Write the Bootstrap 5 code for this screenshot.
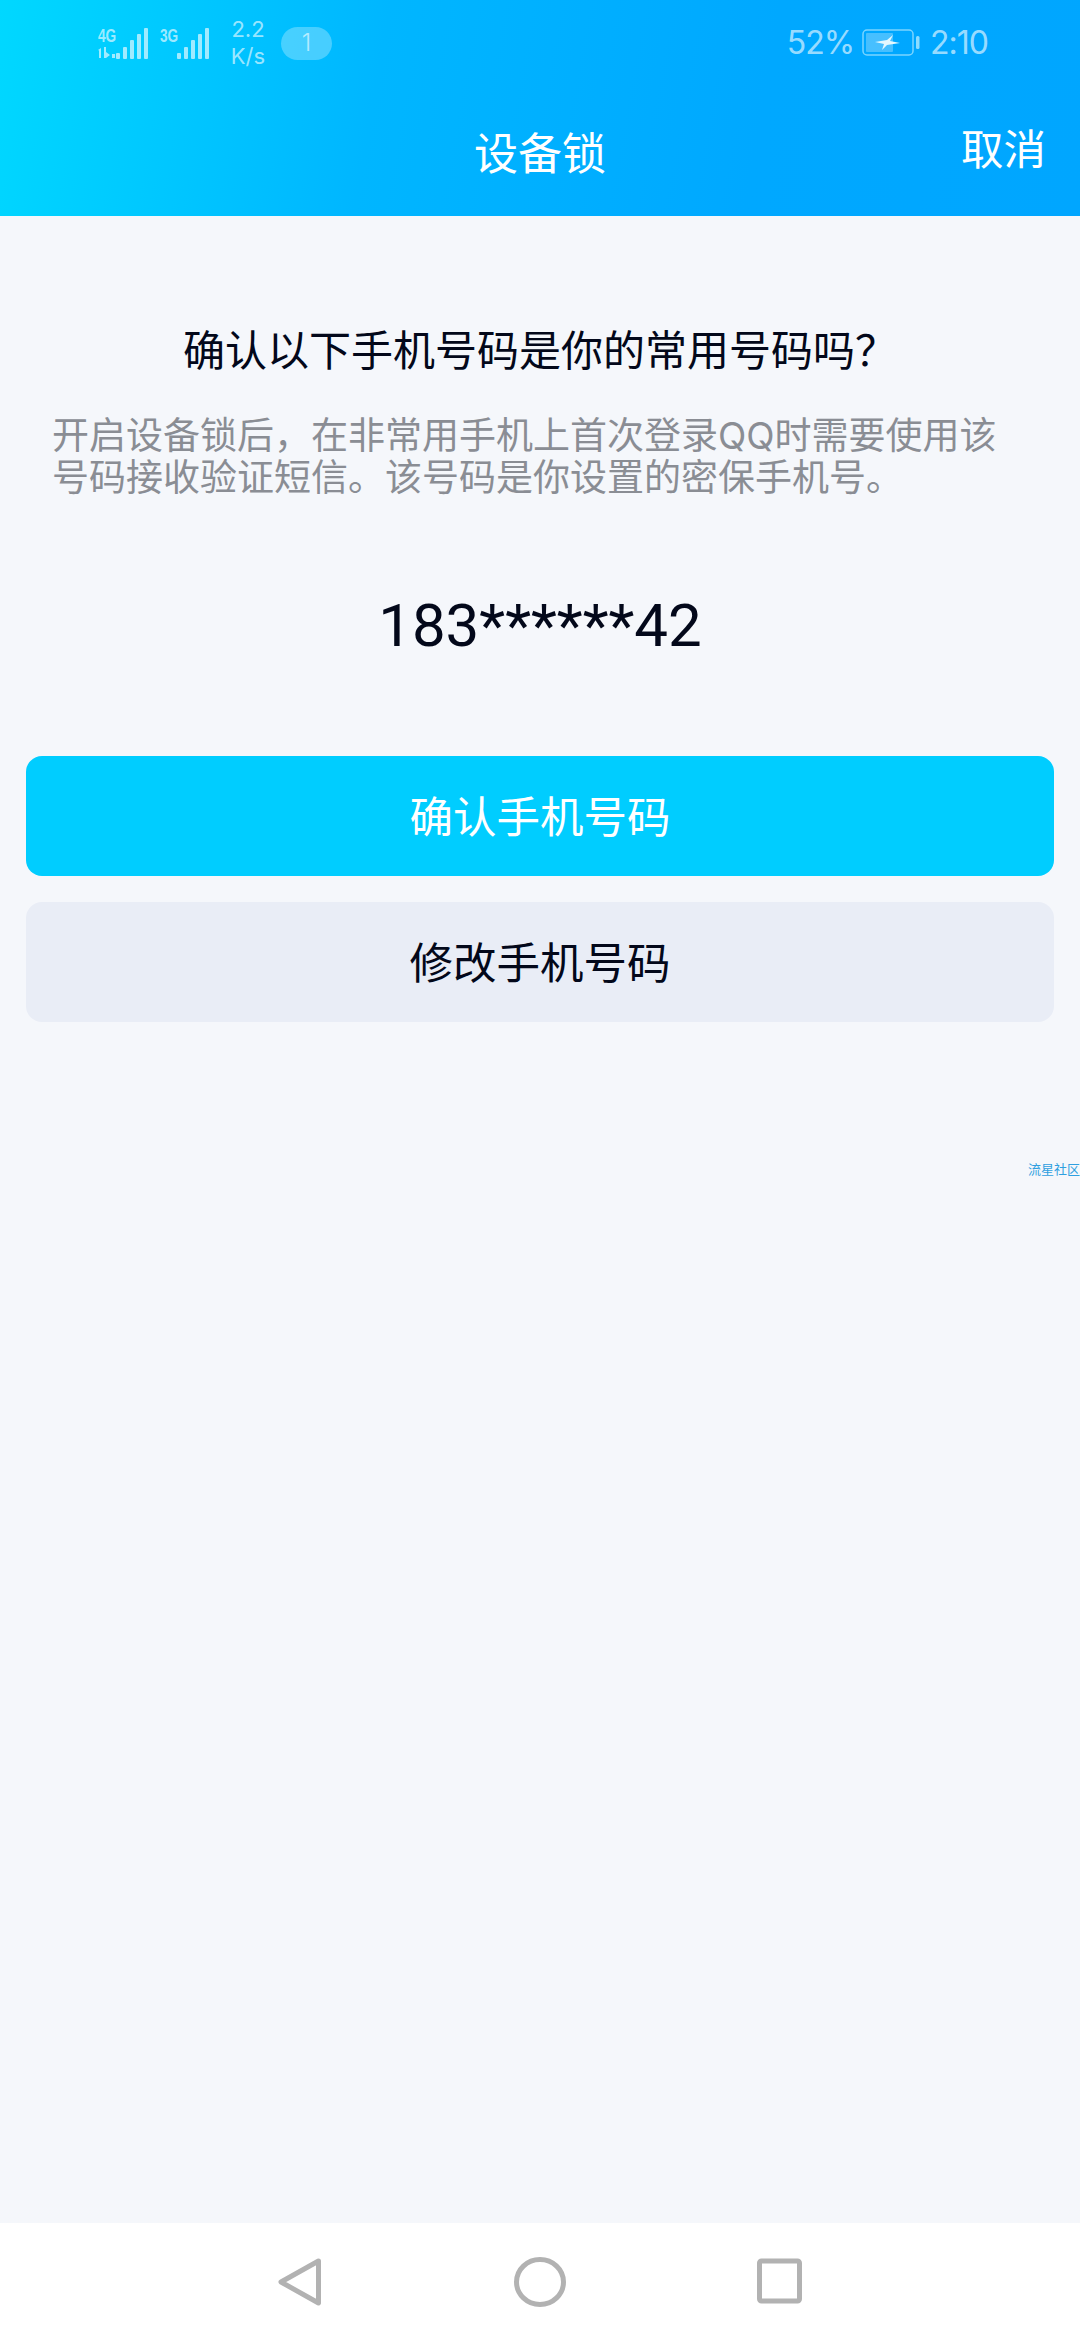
<!DOCTYPE html>
<html lang="zh-CN">
<head>
  <meta charset="UTF-8">
  <meta name="viewport" content="width=device-width, initial-scale=1.0">
  <title>设备锁</title>
  <link href="https://cdn.jsdelivr.net/npm/bootstrap@5.3.3/dist/css/bootstrap.min.css" rel="stylesheet">
  <style>
    body {
      width: 1080px;
      height: 2340px;
      background: #f5f7fb;
      font-family: Inter, "Noto Sans CJK SC", sans-serif;
      color: #03081a;
    }
    .top-head {
      height: 216px;
      background: linear-gradient(100deg, #00d8ff 0%, #00b6ff 35%, #00a8ff 70%, #00a6ff 100%);
      color: #fff;
    }
    .status-row {
      height: 86px;
      padding: 0 92px 0 98px;
      color: rgba(255, 255, 255, .62);
    }
    .net-label {
      font-family: "Liberation Sans", sans-serif;
      font-weight: 700;
      font-size: 19px;
      transform: scaleX(.72);
      transform-origin: left center;
      line-height: 15px;
      width: 18px;
      color: rgba(200, 243, 255, .8);
    }
    .net-three { margin-left: 12px; }
    .three-label { width: 17px; }
    .speed-box {
      margin-left: 17px;
      font-size: 22px;
      line-height: 27px;
      width: 44px;
    }
    .msg-pill {
      margin-left: 11px;
      width: 51px;
      height: 33px;
      border-radius: 17px;
      background: rgba(255, 255, 255, .28);
      font-size: 24px;
      font-weight: 300;
    }
    .clock-text { font-size: 32px; letter-spacing: -1px; }
    .title-row {
      display: grid;
      grid-template-columns: 1fr auto 1fr;
      height: 130px;
    }
    .title-text { font-size: 44px; padding-top: 6px; }
    .cancel-text { font-size: 42.5px; padding: 0 34px 3px 0; }
    .ask-text {
      margin-top: 110px;
      font-size: 42px;
      line-height: 50px;
    }
    .desc-text {
      margin: 39px 70px 0 52px;
      font-size: 37px;
      line-height: 42px;
      color: #8a8d94;
    }
    .phone-text {
      margin-top: 87px;
      font-family: Roboto, sans-serif;
      font-size: 60px;
      line-height: 80px;
    }
    .btn-stack { padding: 0 26px; }
    .act-btn {
      display: block;
      width: 100%;
      height: 120px;
      padding-top: 4px;
      border: 0;
      border-radius: 16px;
      font-size: 43.5px;
    }
    .act-main { background: #00cdff; color: #fff; margin-top: 90px; }
    .act-alt { background: #e9edf6; color: #03081a; margin-top: 26px; }
    .wm-text {
      margin-top: 138px;
      font-size: 13px;
      line-height: 18px;
      color: #2f9fe0;
      white-space: nowrap;
    }
    .nav-strip { height: 117px; background: #fff; }
  </style>
</head>
<body class="d-flex flex-column m-0">
  <header class="top-head flex-shrink-0">
    <div class="status-row d-flex align-items-center">
      <div class="d-flex">
        <div>
          <div class="net-label">4G</div>
          <svg class="d-block mt-1" width="18" height="11" viewBox="0 0 18 11"><path fill="#c8f3ff" fill-opacity=".8" d="M0 3l3-2v10H1V3.500zM6 0h2v11H6zM8 5l4 3-4 3zM14 7h3v4h-3z"/></svg>
        </div>
        <svg width="32" height="31" viewBox="0 0 32 31"><g fill="#c8f3ff" fill-opacity=".8"><rect x="0" y="25" width="4" height="6" rx="1"/><rect x="7" y="19" width="4" height="12" rx="1"/><rect x="14" y="12" width="4" height="19" rx="1"/><rect x="21" y="6" width="4" height="25" rx="1"/><rect x="28" y="0" width="4" height="31" rx="1"/></g></svg>
      </div>
      <div class="d-flex net-three">
        <div class="net-label three-label">3G</div>
        <svg width="32" height="31" viewBox="0 0 32 31"><g fill="#c8f3ff" fill-opacity=".8"><rect x="0" y="25" width="4" height="6" rx="1"/><rect x="7" y="19" width="4" height="12" rx="1"/><rect x="14" y="12" width="4" height="19" rx="1"/><rect x="21" y="6" width="4" height="25" rx="1"/><rect x="28" y="0" width="4" height="31" rx="1"/></g></svg>
      </div>
      <div class="speed-box text-center">2.2<br>K/s</div>
      <div class="msg-pill d-flex align-items-center justify-content-center">1</div>
      <div class="clock-text d-flex align-items-center gap-2 ms-auto">
        <span>52%</span>
        <svg width="60" height="28" viewBox="0 0 60 28">
          <rect x="1" y="1" width="50" height="25" rx="4" fill="none" stroke="#bdeeff" stroke-opacity=".65" stroke-width="1.500"/>
          <rect x="4" y="4" width="27" height="19" rx="1" fill="#fff" fill-opacity=".28"/>
          <rect x="54" y="7" width="3.500" height="13" rx="1.500" fill="#bdeeff" fill-opacity=".75"/>
          <path d="M13 13l12-2 6-5-3 6 10 2-13 2-5 5 2-6z" fill="#e4f8ff"/>
        </svg>
        <span>2:10</span>
      </div>
    </div>
    <div class="title-row align-items-center">
      <span></span>
      <div class="title-text">设备锁</div>
      <div class="cancel-text text-end">取消</div>
    </div>
  </header>

  <main class="flex-grow-1">
    <div class="ask-text text-center">确认以下手机号码是你的常用号码吗？</div>
    <p class="desc-text">开启设备锁后，在非常用手机上首次登录QQ时需要使用该号码接收验证短信。该号码是你设置的密保手机号。</p>
    <div class="phone-text text-center">183******42</div>
    <div class="btn-stack">
      <button type="button" class="act-btn act-main">确认手机号码</button>
      <button type="button" class="act-btn act-alt">修改手机号码</button>
    </div>
    <div class="wm-text text-end">流星社区</div>
  </main>

  <nav class="nav-strip flex-shrink-0 d-flex align-items-center justify-content-center">
    <svg width="600" height="60" viewBox="0 0 600 60">
      <g fill="none" stroke="#b2b2b2" stroke-width="5" stroke-linejoin="round">
        <path d="M78.500 9 41 30l37.500 21z"/>
        <ellipse cx="300" cy="30" rx="23.500" ry="22.500"/>
        <rect x="519.500" y="9" width="40" height="40" rx="2"/>
      </g>
    </svg>
  </nav>
  <script src="https://cdn.jsdelivr.net/npm/bootstrap@5.3.3/dist/js/bootstrap.bundle.min.js"></script>
</body>
</html>
